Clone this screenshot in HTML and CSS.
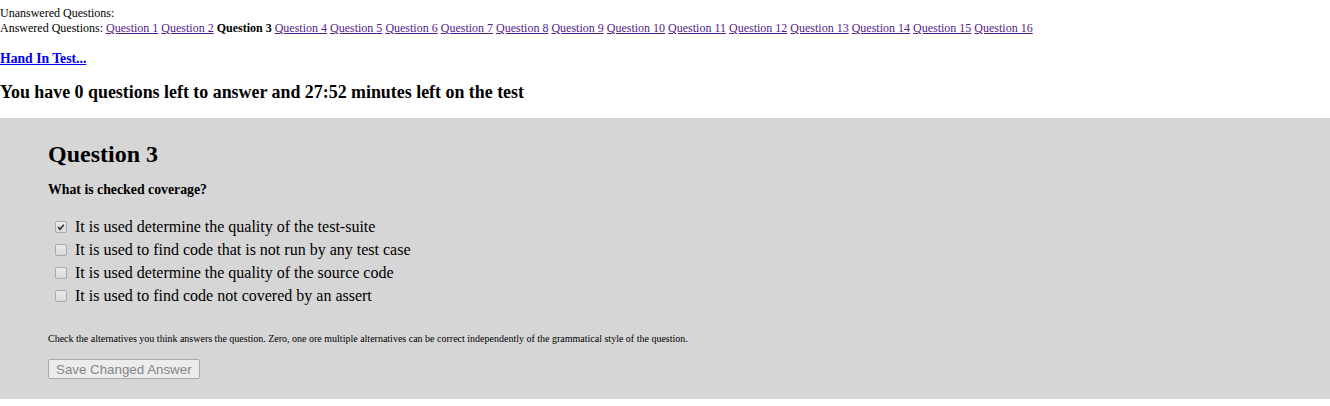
FILE: index.html
```html
<!DOCTYPE html>
<html>
<head>
<meta charset="utf-8">
<link rel="stylesheet" href="styles.css">
</head>
<body>
<div class="nav">
  <div class="nav-line">Unanswered Questions:</div>
  <div class="nav-line">Answered Questions: <a class="visited" href="#">Question 1</a> <a class="visited" href="#">Question 2</a> <b>Question 3</b> <a class="visited" href="#">Question 4</a> <a class="visited" href="#">Question 5</a> <a class="visited" href="#">Question 6</a> <a class="visited" href="#">Question 7</a> <a class="visited" href="#">Question 8</a> <a class="visited" href="#">Question 9</a> <a class="visited" href="#">Question 10</a> <a class="visited" href="#">Question 11</a> <a class="visited" href="#">Question 12</a> <a class="visited" href="#">Question 13</a> <a class="visited" href="#">Question 14</a> <a class="visited" href="#">Question 15</a> <a class="visited" href="#">Question 16</a></div>
</div>
<p class="handin"><a href="#">Hand In Test...</a></p>
<h3 class="status">You have 0 questions left to answer and 27:52 minutes left on the test</h3>
<div class="question">
  <h2 class="q-title">Question 3</h2>
  <p class="q-text">What is checked coverage?</p>
  <div class="options">
    <label class="option"><input class="box" type="checkbox" checked> It is used determine the quality of the test-suite</label>
    <label class="option"><input class="box" type="checkbox"> It is used to find code that is not run by any test case</label>
    <label class="option"><input class="box" type="checkbox"> It is used determine the quality of the source code</label>
    <label class="option"><input class="box" type="checkbox"> It is used to find code not covered by an assert</label>
  </div>
  <p class="hint">Check the alternatives you think answers the question. Zero, one ore multiple alternatives can be correct independently of the grammatical style of the question.</p>
  <button class="save" disabled>Save Changed Answer</button>
</div>
</body>
</html>
```

FILE: styles.css
```css
html, body {
  margin: 0;
  padding: 0;
  background: #fff;
}
body {
  font-family: "Liberation Serif", "Times New Roman", serif;
  color: #000;
}
.nav {
  font-size: 12px;
  line-height: 15px;
  padding-top: 6px;
}
.visited {
  color: #551a8b;
}
.handin {
  margin: 14px 0 0;
  font-size: 13.7px;
  font-weight: bold;
  line-height: 18px;
}
.handin a {
  color: #0000ee;
}
.status {
  font-size: 17.9px;
  margin: 13px 0 0;
  line-height: 22px;
}
.question {
  margin-top: 15px;
  background: #d6d6d6;
  padding: 20px 48px 20px;
}
.q-title {
  margin: 0;
  font-size: 24px;
  line-height: 32px;
}
.q-text {
  margin: 12px 0 0;
  font-size: 13.8px;
  line-height: 16px;
  font-weight: bold;
}
.options {
  margin-top: 17px;
  display: flex;
  flex-direction: column;
  padding-left: 4px;
}
.option {
  font-size: 16px;
  line-height: 23px;
  display: flex;
  align-items: center;
}
.box {
  appearance: none;
  -webkit-appearance: none;
  margin: 0 8px 0 3px;
  width: 12px;
  height: 12px;
  border: 1px solid #aaaaaa;
  border-radius: 2px;
  background: linear-gradient(#ebebeb, #d9d9d9);
  box-sizing: border-box;
}
.box:checked {
  background: url("data:image/svg+xml,%3Csvg xmlns='http://www.w3.org/2000/svg' viewBox='0 0 12 12'%3E%3Cpath d='M2.4 6.2 L4.8 8.6 L9.4 3.2' fill='none' stroke='%23333' stroke-width='2'/%3E%3C/svg%3E") center/10px 10px no-repeat, linear-gradient(#ebebeb, #d9d9d9);
}
.hint {
  font-size: 10px;
  line-height: 12px;
  margin: 26px 0 0;
}
.save {
  display: block;
  margin-top: 14px;
  height: 20px;
  padding: 0 7px;
  font-family: "Liberation Sans", Arial, sans-serif;
  font-size: 13.33px;
  color: #868686;
  background: #ececec;
  border: 1px solid #a9a9a9;
  border-radius: 2px;
}
```
